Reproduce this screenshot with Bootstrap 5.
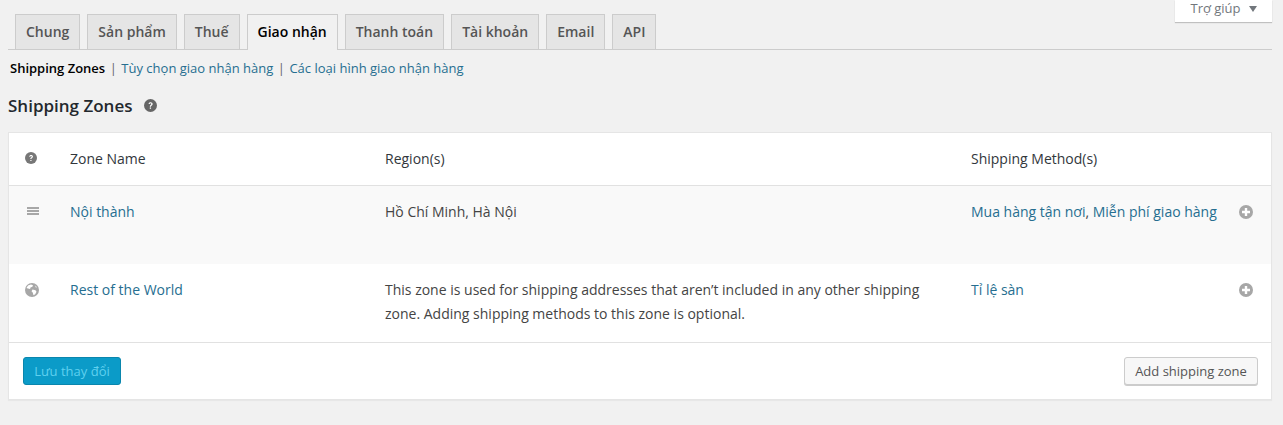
<!DOCTYPE html>
<html lang="vi">
<head>
<meta charset="utf-8">
<title>Shipping Zones</title>
<link href="https://cdn.jsdelivr.net/npm/bootstrap@5.3.0/dist/css/bootstrap.min.css" rel="stylesheet">
<style>
html,body{height:425px;overflow:hidden}
body{background:#f1f1f1;font-family:"Open Sans","Noto Sans",sans-serif;font-size:14px;color:#444;padding:0 11px 0 8px}
a{color:#266e90;text-decoration:none}
.wc-help{position:absolute;right:11px;top:0;width:97px;height:22px;background:#fff;box-shadow:0 1px 1px rgba(0,0,0,.2);color:#72777c;font-size:13px;display:flex;align-items:center;justify-content:center;gap:8px;padding-bottom:5px}
.wc-caret{width:0;height:0;border-left:4px solid transparent;border-right:4px solid transparent;border-top:6px solid #72777c}
.wc-tabs{height:50px;padding:14px 0 0 7px;border-bottom:1px solid #ccc;gap:7px;margin:0}
.wc-tab{height:35px;padding:0 10px 1px;background:#e5e5e5;border:1px solid #ccc;border-bottom:0;color:#555;font-size:14px;font-weight:600;display:flex;align-items:center}
.wc-tab-on{background:#f1f1f1;color:#000;height:36px;margin-bottom:-1px;padding-bottom:2px;position:relative}
.wc-sub{height:37px;padding:0 0 0 2px;font-size:13px;color:#666;gap:4.500px;margin:0;align-items:center}
.wc-sub b{color:#000;font-weight:600}
.wc-title{font-size:17px;font-weight:600;color:#23282d;height:37px;margin:0 0 8px;gap:12px;line-height:1}
.wc-card{background:#fff;border:1px solid #e5e5e5;box-shadow:0 1px 1px rgba(0,0,0,.04);height:268px}
.wc-row{display:grid;grid-template-columns:61px 315px 586px 1fr 32px}
.wc-row>div{padding-top:14px;line-height:24px}
.wc-head{height:53px;border-bottom:1px solid #e1e1e1;color:#32373c}
.wc-one{height:78px;background:#f9f9f9}
.wc-two{height:79px;border-bottom:1px solid #e1e1e1}
.wc-ic{padding-left:16px;display:block}
.wc-ic svg,.wc-plus svg{display:block;margin-top:5px}
.wc-region{padding-right:24px}
.wc-foot{padding:14px 13px 14px 14px;height:57px}
.wc-save{background:#0b9bc8;border:1px solid #0a86ad;border-radius:3px;color:#5fd0ef;font-size:13px;height:28px;width:98px;padding:0;line-height:26px}
.wc-add{background:#f7f7f7;border:1px solid #ccc;border-radius:3px;box-shadow:0 1px 0 #ccc;color:#555;font-size:13px;height:28px;width:134px;padding:0;line-height:26px}
.wc-bars{margin-left:2px}
</style>
</head>
<body>
<div class="wc-help">Trợ giúp <span class="wc-caret"></span></div>
<nav class="d-flex wc-tabs">
<a class="wc-tab" href="#">Chung</a><a class="wc-tab" href="#">Sản phẩm</a><a class="wc-tab" href="#">Thuế</a><a class="wc-tab wc-tab-on" href="#">Giao nhận</a><a class="wc-tab" href="#">Thanh toán</a><a class="wc-tab" href="#">Tài khoản</a><a class="wc-tab" href="#">Email</a><a class="wc-tab" href="#">API</a>
</nav>
<div class="d-flex wc-sub"><b>Shipping Zones</b><span>|</span><a href="#">Tùy chọn giao nhận hàng</a><span>|</span><a href="#">Các loại hình giao nhận hàng</a></div>
<h2 class="d-flex align-items-center wc-title">Shipping Zones
<svg width="13" height="13" viewBox="0 0 14 14"><circle cx="7" cy="7" r="7" fill="#666"/><path d="M4.900 5.400C5 4 6 3.400 7.100 3.400c1.300 0 2.200.8 2.200 1.900 0 1.700-1.800 1.600-1.800 3H6.200c0-2 1.700-2 1.700-3 0-.4-.3-.7-.8-.7-.6 0-.9.4-1 .8z M6.200 9.200h1.400v1.400H6.200z" fill="#fff"/></svg></h2>
<div class="wc-card">
 <div class="wc-row wc-head">
  <div class="wc-ic"><svg width="12" height="12" viewBox="0 0 14 14"><circle cx="7" cy="7" r="7" fill="#777"/><path d="M4.900 5.400C5 4 6 3.400 7.100 3.400c1.300 0 2.200.8 2.200 1.900 0 1.700-1.800 1.600-1.800 3H6.200c0-2 1.700-2 1.700-3 0-.4-.3-.7-.8-.7-.6 0-.9.4-1 .8z M6.200 9.200h1.400v1.400H6.200z" fill="#fff"/></svg></div>
  <div>Zone Name</div><div>Region(s)</div><div>Shipping Method(s)</div><div></div>
 </div>
 <div class="wc-row wc-one">
  <div class="wc-ic"><svg class="wc-bars" width="12" height="12" viewBox="0 0 12 12"><path d="M0 2h12v2H0zM0 5h12v2H0zM0 8h12v2H0z" fill="#a7a7a7"/></svg></div>
  <div><a href="#">Nội thành</a></div><div class="wc-region">Hồ Chí Minh, Hà Nội</div><div><a href="#">Mua hàng tận nơi</a>, <a href="#">Miễn phí giao hàng</a></div>
  <div class="wc-plus"><svg width="14" height="14" viewBox="0 0 14 14"><circle cx="7" cy="7" r="7" fill="#a7a7a7"/><path d="M3 5.800h2.800V3h2.400v2.800H11v2.400H8.200V11H5.800V8.200H3z" fill="#fff"/></svg></div>
 </div>
 <div class="wc-row wc-two">
  <div class="wc-ic"><svg width="14" height="14" viewBox="0 0 14 14"><circle cx="7" cy="7" r="7" fill="#a7a7a7"/><path d="M3 2.500l3-1 2 .8-.8 1.700-1.500.3-.7 1.700L3 5.500 1.500 5zM7.500 6.500l3 .8 1 1.500-1.300 2.500-1.700 1-.8-2.700-1.200-1.400zM10.500 2.500l1.500 2-1.500-.3z" fill="#fff"/></svg></div>
  <div><a href="#">Rest of the World</a></div><div class="wc-region">This zone is used for shipping addresses that aren’t included in any other shipping zone. Adding shipping methods to this zone is optional.</div><div><a href="#">Tỉ lệ sàn</a></div>
  <div class="wc-plus"><svg width="14" height="14" viewBox="0 0 14 14"><circle cx="7" cy="7" r="7" fill="#a7a7a7"/><path d="M3 5.800h2.800V3h2.400v2.800H11v2.400H8.200V11H5.800V8.200H3z" fill="#fff"/></svg></div>
 </div>
 <div class="d-flex justify-content-between wc-foot">
  <button class="btn wc-save" type="button">Lưu thay đổi</button>
  <button class="btn wc-add" type="button">Add shipping zone</button>
 </div>
</div>
<script src="https://cdn.jsdelivr.net/npm/bootstrap@5.3.0/dist/js/bootstrap.bundle.min.js"></script>
</body>
</html>
